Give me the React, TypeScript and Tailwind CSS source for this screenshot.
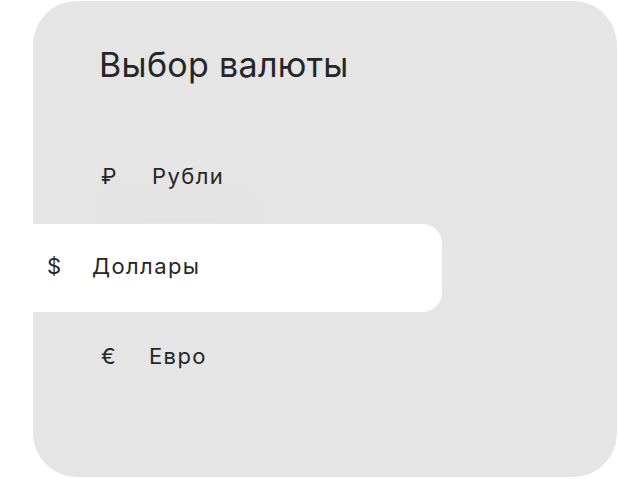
const currencies = [
  { symbol: "₽", label: "Рубли", active: false, col: "w-[51px]" },
  { symbol: "$", label: "Доллары", active: true, col: "w-[45px]" },
  { symbol: "€", label: "Евро", active: false, col: "w-[48px]" },
];

export default function App() {
  return (
    <div
      className="min-h-screen bg-white pl-[33px] pt-[1px]"
      style={{ fontFamily: "Inter, 'Noto Sans', sans-serif" }}
    >
      <div className="relative w-[584px] h-[476px] rounded-[44px] bg-[#e5e5e5] pt-[47px] overflow-hidden">
        {/* leftover ripple under the first row */}
        <div className="pointer-events-none absolute left-[70px] top-[192px] w-[150px] h-[36px] rounded-full bg-[#dcdcdc] opacity-25 blur-[10px]" />

        <h1 className="relative pl-[66px] text-[34px] leading-[34px] font-normal text-[#262626] tracking-[0.3px]">
          Выбор валюты
        </h1>

        <div className="relative mt-[52px] flex flex-col gap-[2px]">
          {currencies.map((c) => (
            <div
              key={c.label}
              className={
                c.active
                  ? "flex items-center h-[88px] w-[409px] rounded-r-[20px] bg-white pl-[14px]"
                  : "flex items-center h-[88px] w-[409px] pl-[68px]"
              }
            >
              <div className="flex items-center pb-[4px] text-[22px] leading-none text-[#262626]">
                <span className={c.col}>{c.symbol}</span>
                <span className="tracking-[1.4px]">{c.label}</span>
              </div>
            </div>
          ))}
        </div>
      </div>
    </div>
  );
}
